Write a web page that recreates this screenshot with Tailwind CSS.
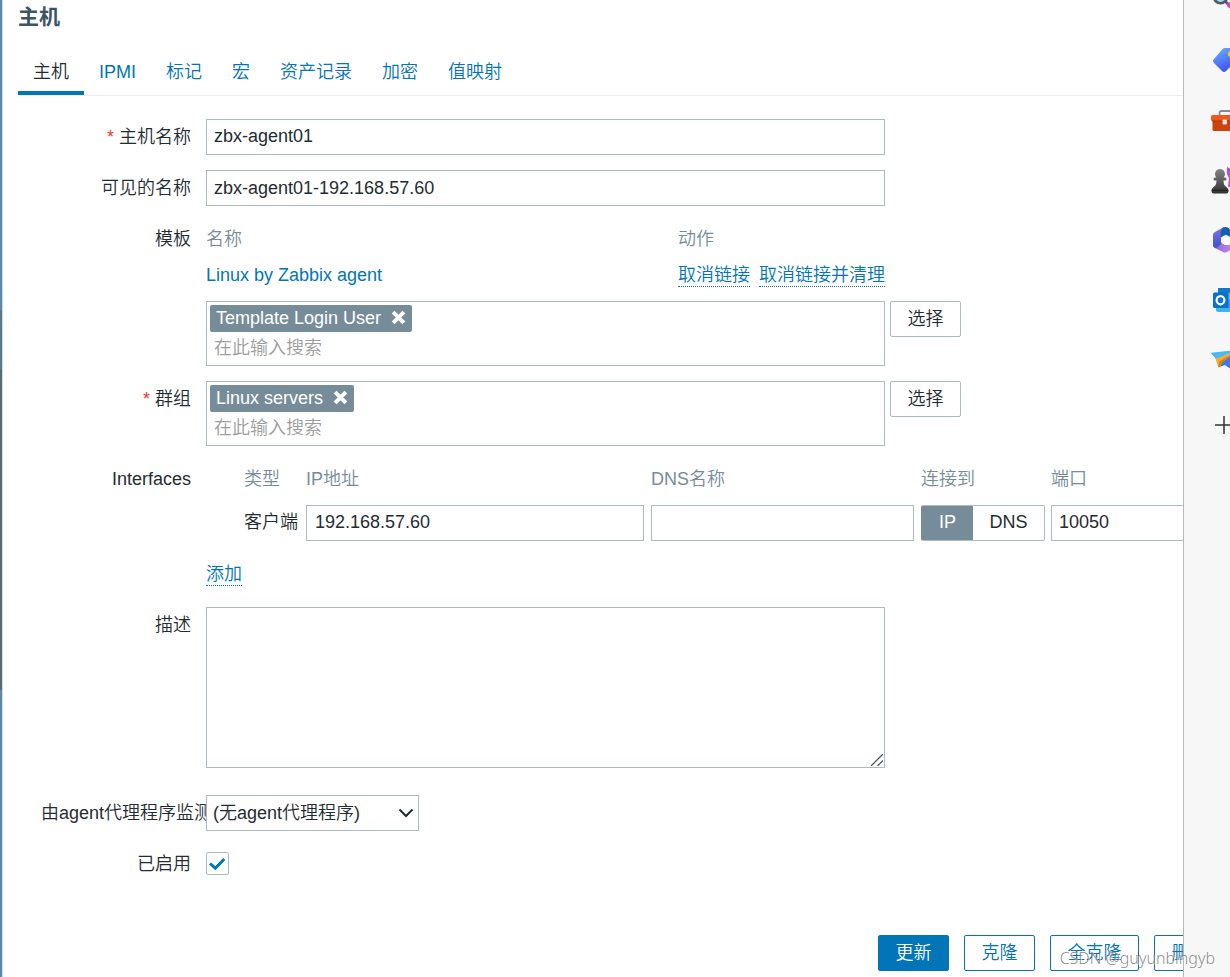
<!DOCTYPE html>
<html lang="zh-CN">
<head>
<meta charset="utf-8">
<title>主机</title>
<script src="https://cdn.jsdelivr.net/npm/@tailwindcss/browser@4"></script>
</head>
<body class="relative flex h-screen overflow-hidden bg-white font-['Liberation_Sans','Noto_Sans_CJK_SC',sans-serif] text-lg/9 font-[350] text-[#1f2c33]">
  <!-- Dimmed page edge behind the dialog -->
  <div class="flex w-[3px] shrink-0 flex-col border-r border-[#cbdce6]">
    <div class="h-[310px] bg-[#5b88a3]"></div>
    <div class="h-[60px] bg-[#5a7886]"></div>
    <div class="h-[320px] bg-[#5c6b72]"></div>
    <div class="flex-1 bg-[#5b8aa7]"></div>
  </div>

  <main class="min-w-0 flex-1 overflow-hidden pl-[15px]">
    <div class="min-w-[1207px]">
      <h1 class="text-[21px]/[34px] font-bold text-[#3c5563]">主机</h1>

      <nav class="mt-5 flex border-b border-[#ebeef0] text-[#0275b8]">
        <a href="#host" class="border-b-4 border-[#0275b8] px-[15px] pb-px text-[#1f2c33]">主机</a>
        <a href="#ipmi" class="px-[15px]">IPMI</a>
        <a href="#tags" class="px-[15px]">标记</a>
        <a href="#macros" class="px-[15px]">宏</a>
        <a href="#inventory" class="px-[15px]">资产记录</a>
        <a href="#encryption" class="px-[15px]">加密</a>
        <a href="#valuemap" class="px-[15px]">值映射</a>
      </nav>

      <form class="mt-[23px]">
        <div class="grid grid-cols-[188px_1fr] gap-y-[15px]">
          <label for="name" class="pr-[15px] text-right"><span class="text-[#e33734]">*</span> 主机名称</label>
          <input id="name" type="text" value="zbx-agent01" class="h-9 w-[679px] border border-[#acbbc2] px-[7px] pb-[2px]">

          <label for="visible" class="pr-[15px] text-right">可见的名称</label>
          <input id="visible" type="text" value="zbx-agent01-192.168.57.60" class="h-9 w-[679px] border border-[#acbbc2] px-[7px]">

          <label for="templates" class="pr-[15px] text-right">模板</label>
          <div>
            <table class="w-[679px] table-fixed text-left">
              <thead class="text-[#768d99]"><tr><th class="w-[472px] font-[350]">名称</th><th class="font-[350]">动作</th></tr></thead>
              <tbody class="text-[#0275b8]"><tr>
                <td><a href="#template">Linux by Zabbix agent</a></td>
                <td><div class="flex h-9 items-center gap-[9px] whitespace-nowrap leading-[22px]"><a href="#unlink" class="border-b border-dotted border-[#0275b8]">取消链接</a><a href="#clear" class="border-b border-dotted border-[#0275b8]">取消链接并清理</a></div></td>
              </tr></tbody>
            </table>
            <div class="mt-2 flex items-start gap-[5px]">
              <div class="h-[65px] w-[679px] border border-[#acbbc2] p-[3px]">
                <div class="flex h-[27px] w-fit items-center gap-[10px] rounded-xs bg-[#768d99] px-[6px] pb-[2px] text-white">
                  <span class="leading-6">Template Login User</span>
                  <button type="button" aria-label="移除 Template Login User"><svg class="size-[15px]" viewBox="0 0 14 14"><path d="M2 2L12 12M12 2L2 12" stroke="#fff" stroke-width="3.800"/></svg></button>
                </div>
                <input id="templates" type="text" placeholder="在此输入搜索" class="block h-8 w-full px-1 placeholder:text-[#9d9d9d]">
              </div>
              <button type="button" class="h-9 w-[71px] rounded-xs border border-[#acbbc2] leading-[34px]">选择</button>
            </div>
          </div>

          <label for="groups" class="pr-[15px] text-right"><span class="text-[#e33734]">*</span> 群组</label>
          <div class="flex items-start gap-[5px]">
            <div class="h-[65px] w-[679px] border border-[#acbbc2] p-[3px]">
              <div class="flex h-[27px] w-fit items-center gap-[10px] rounded-xs bg-[#768d99] px-[6px] pb-[2px] text-white">
                <span class="leading-6">Linux servers</span>
                <button type="button" aria-label="移除 Linux servers"><svg class="size-[15px]" viewBox="0 0 14 14"><path d="M2 2L12 12M12 2L2 12" stroke="#fff" stroke-width="3.800"/></svg></button>
              </div>
              <input id="groups" type="text" placeholder="在此输入搜索" class="block h-8 w-full px-1 placeholder:text-[#9d9d9d]">
            </div>
            <button type="button" class="h-9 w-[71px] rounded-xs border border-[#acbbc2] leading-[34px]">选择</button>
          </div>

          <div class="pr-[15px] text-right">Interfaces</div>
          <div>
            <table class="ml-[38px] w-[963px] table-fixed text-left">
              <thead class="text-[#768d99]"><tr>
                <th class="w-[62px] font-[350]">类型</th>
                <th class="w-[345px] font-[350]">IP地址</th>
                <th class="w-[270px] font-[350]">DNS名称</th>
                <th class="w-[130px] font-[350]">连接到</th>
                <th class="font-[350]">端口</th>
              </tr></thead>
              <tbody><tr>
                <td class="pt-2 align-top leading-[34px]">客户端</td>
                <td class="pt-2 pr-[7px] align-top"><input type="text" aria-label="IP地址" value="192.168.57.60" class="block h-9 w-full border border-[#acbbc2] px-2 pb-[2px]"></td>
                <td class="pt-2 pr-[7px] align-top"><input type="text" aria-label="DNS名称" class="block h-9 w-full border border-[#acbbc2] px-2"></td>
                <td class="pt-2 pr-[6px] align-top">
                  <div class="flex h-9 overflow-hidden rounded-xs border border-[#768d99] border-r-[#acbbc2] border-y-[#acbbc2] leading-8">
                    <label class="w-[51px] bg-[#768d99] text-center text-white"><input type="radio" name="useip" checked class="sr-only">IP</label>
                    <label class="flex-1 text-center"><input type="radio" name="useip" class="sr-only">DNS</label>
                  </div>
                </td>
                <td class="pt-2 align-top"><input type="text" aria-label="端口" value="10050" class="block h-9 w-full border border-[#acbbc2] px-[7px] pb-[2px]"></td>
              </tr></tbody>
            </table>
            <div class="mt-[15px] flex h-9 items-center leading-[22px]"><a href="#add" class="border-b border-dotted border-[#0275b8] text-[#0275b8]">添加</a></div>
          </div>

          <label for="description" class="pr-[15px] text-right">描述</label>
          <div class="relative mb-3 w-[679px]">
            <textarea id="description" class="block h-[161px] w-full resize-none border border-[#acbbc2] p-2"></textarea>
            <svg class="pointer-events-none absolute right-[2px] bottom-[2px] size-3" viewBox="0 0 12 12"><path d="M0 12L12 0M6.500 12L12 6.500" stroke="#555" stroke-width="1.300"/></svg>
          </div>

          <label for="proxy" class="overflow-hidden pl-[23px] whitespace-nowrap">由agent代理程序监测</label>
          <div class="relative w-[213px]">
            <select id="proxy" class="block h-9 w-full appearance-none border border-[#acbbc2] bg-white px-[6px] leading-[34px]"><option>(无agent代理程序)</option></select>
            <svg class="pointer-events-none absolute top-3 right-[5px] h-3 w-4" viewBox="0 0 16 12" fill="none"><path d="M1.500 2.500L8 9L14.500 2.500" stroke="#1f2c33" stroke-width="2"/></svg>
          </div>

          <label for="enabled" class="pr-[15px] text-right">已启用</label>
          <div class="relative pt-[6px]">
            <input id="enabled" type="checkbox" checked class="block size-[23px] appearance-none rounded-xs border border-[#acbbc2]">
            <svg class="pointer-events-none absolute top-[6px] left-0 size-[23px]" viewBox="0 0 23 23" fill="none"><path d="M4 11.500L9.300 16.200L18.300 7" stroke="#0275b8" stroke-width="3"/></svg>
          </div>
        </div>

        <div class="mt-[53px] flex justify-end gap-[15px] leading-[34px] text-[#0275b8]">
          <button type="button" class="h-9 w-[71px] rounded-xs border border-[#0275b8] bg-[#0275b8] text-white">更新</button>
          <button type="button" class="h-9 w-[71px] rounded-xs border border-[#0275b8]">克隆</button>
          <button type="button" class="h-9 w-[89px] rounded-xs border border-[#0275b8]">全克隆</button>
          <button type="button" class="h-9 w-[71px] rounded-xs border border-[#0275b8]">删除</button>
        </div>
      </form>
    </div>
  </main>

  <!-- Browser sidebar -->
  <aside class="w-[47px] shrink-0 overflow-hidden border-l border-[#b9b9b9] bg-[#f7f7f7] pl-[27px]">
    <div class="-mt-[30px] flex flex-col">
      <button type="button" aria-label="搜索" class="flex h-[60px] items-center"><svg class="size-7 shrink-0" viewBox="0 0 28 28"><circle cx="9.500" cy="10.500" r="6.700" fill="#9bdcf8" stroke="#535a60" stroke-width="2.600"/><path d="M14 15l3 3" stroke="#555" stroke-width="2.500"/><path d="M18.500 19l6 5" stroke="#d13cf0" stroke-width="5" stroke-linecap="round"/></svg></button>
      <button type="button" aria-label="购物" class="flex h-[60px] items-center"><svg class="size-7 shrink-0" viewBox="0 0 28 28"><defs><linearGradient id="tag" x1="0" y1="0" x2=".5" y2="1"><stop stop-color="#6cb6ff"/><stop offset="1" stop-color="#4050f3"/></linearGradient></defs><path d="M12 2.500Q13 2 14 2h10q2 0 2 2v10L15 25q-2 2-4 0l-8-8q-2-2 0-4z" fill="url(#tag)"/><circle cx="20" cy="8" r="3.200" fill="#ffc81e"/></svg></button>
      <button type="button" aria-label="工具" class="flex h-[60px] items-center"><svg class="size-7 shrink-0" viewBox="0 0 28 28"><path d="M8.500 10V7q0-2 2-2h8q2 0 2 2v3" fill="none" stroke="#858b90" stroke-width="1.800"/><rect x="1.500" y="13" width="25" height="12" rx="1.500" fill="#cc430d"/><rect x="0" y="9" width="28" height="6" rx="1.500" fill="#ef581d"/><path d="M1 15h26" stroke="#a5340c"/><rect x="11.500" y="13.500" width="4.500" height="5" rx="1" fill="#d8dfe2"/></svg></button>
      <button type="button" aria-label="游戏" class="flex h-[60px] items-center"><svg class="size-7 shrink-0" viewBox="0 0 28 28"><defs><linearGradient id="pawn" x2="0" y2="1"><stop stop-color="#858585"/><stop offset="1" stop-color="#303030"/></linearGradient></defs><path d="M16 1l4 2h6v18h-9l1-9-2-4z" fill="#b54af0"/><path d="M9 3a5 5 0 0 1 3.500 8.500H14q1.500 0 1.500 1.500T14 14.500h-1.500q0 5 3 6.500 2 1.500 2 3.500 0 3-2 3h-13q-2 0-2-3 0-2 2-3.500 3-1.500 3-6.500H4Q2.500 14.500 2.500 13T4 11.500h1.500A5 5 0 0 1 9 3z" fill="url(#pawn)"/><path d="M.7 24.200h16.600" stroke="#252525" stroke-width="1.200"/></svg></button>
      <button type="button" aria-label="Microsoft 365" class="flex h-[60px] items-center"><svg class="size-7 shrink-0" viewBox="0 0 28 28"><defs><linearGradient id="mleft" x2="0" y2="1"><stop stop-color="#7d70e8"/><stop offset="1" stop-color="#3c54c9"/></linearGradient><linearGradient id="mbase" x2="1"><stop stop-color="#8c66d3"/><stop offset="1" stop-color="#cd88e5"/></linearGradient></defs><path d="M2 19l7-4 5 4h5l6-5v5q0 2-2 3l-7 4q-2 1-4 0l-8-4q-2-1-2-3z" fill="url(#mbase)"/><path d="M12 1.500q2-1 4 0l7 4q2 1 2 3V15l-6-4-4-2-4 2z" fill="#2979c9"/><path d="M12 1.500L4 6Q2 7 2 9v10q0 2 2 3 2 0 4-2 2-1 2-3v-5q0-2 2-3Z" fill="url(#mleft)"/><path d="M12 1.500q-3 3-2 10l4-3 5 1-1-7q-2-2-6-1z" fill="#1760a7"/><circle cx="14.500" cy="14" r="4.500" fill="#f7f7f7"/></svg></button>
      <button type="button" aria-label="Outlook" class="flex h-[60px] items-center"><svg class="size-7 shrink-0" viewBox="0 0 28 28"><rect x="7" y="2" width="20" height="24" rx="1.500" fill="#28a7e8"/><path d="M7 2h20v5H7z" fill="#137bc4"/><path d="M16 7h11v7H16z" fill="#47c7f3"/><path d="M5 22h22v4H7q-2 0-2-2z" fill="#36b8ee"/><rect x="2" y="6.500" width="15.500" height="15.500" rx="1.500" fill="#0872ca"/><ellipse cx="9.500" cy="14.200" rx="3.900" ry="4.100" fill="none" stroke="#fff" stroke-width="2.200"/></svg></button>
      <button type="button" aria-label="Drop" class="flex h-[60px] items-center"><svg class="size-7 shrink-0" viewBox="0 0 28 28"><path d="M11 15.500L27 5l-5 19.500-8-5.500-5 1.700z" fill="#3d76ee"/><path d="M0 7.200Q0 6.700 2 6.500L27 4 5 13z" fill="#49b9f2"/><path d="M4.500 12.800L27 4.500 12 15.700 8.500 21.300H7.300z" fill="#f7a827"/><path d="M7.300 21.300L8.500 15.500 27 4.500 12 15.700 8.500 21.300z" fill="#d48411"/></svg></button>
      <button type="button" aria-label="添加" class="flex h-[70px] items-center"><svg class="size-7 shrink-0" viewBox="0 0 28 28"><path d="M4 14h18M13 5v18" stroke="#333" stroke-width="1.500"/></svg></button>
    </div>
  </aside>

  <!-- Watermark -->
  <div class="pointer-events-none absolute right-[15px] bottom-[7px] font-['Noto_Sans',sans-serif] text-base/6 text-[#7d7d7d]/90 text-shadow-[1px_1px_0_#ffffff99]">CSDN @guyunbingyb</div>
</body>
</html>
